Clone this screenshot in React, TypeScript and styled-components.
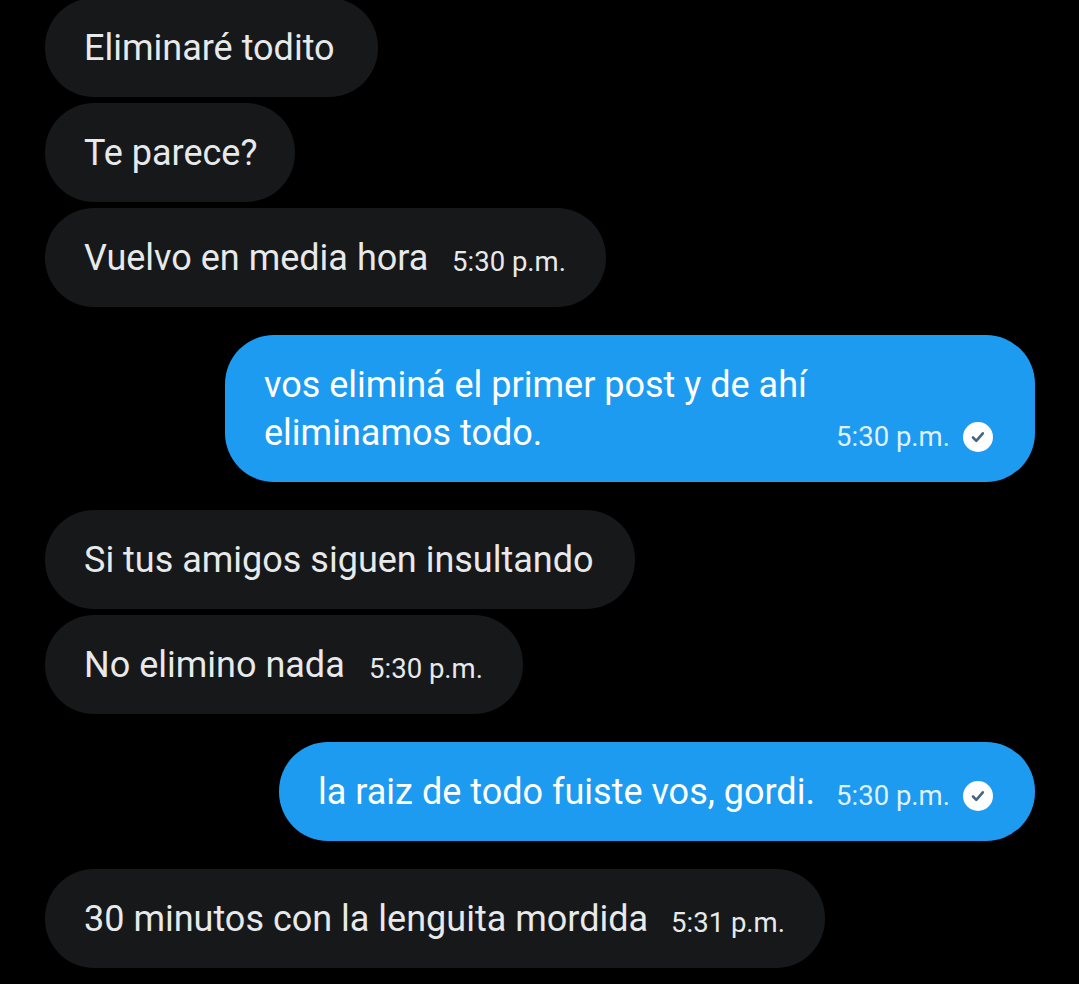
import React from "react";
import styled, { createGlobalStyle } from "styled-components";

const GlobalStyle = createGlobalStyle`
  html, body {
    margin: 0;
    padding: 0;
    background: #000;
  }
`;

type Message = {
  id: number;
  lines: string[];
  width: number;
  time?: string;
  mine?: boolean;
  gap: number;
};

const messages: Message[] = [
  { id: 1, lines: ["Eliminaré todito"], width: 333, gap: 0 },
  { id: 2, lines: ["Te parece?"], width: 250, gap: 6 },
  { id: 3, lines: ["Vuelvo en media hora"], width: 561, time: "5:30 p.m.", gap: 6 },
  {
    id: 4,
    lines: ["vos eliminá el primer post y de ahí", "eliminamos todo."],
    width: 810,
    time: "5:30 p.m.",
    mine: true,
    gap: 28,
  },
  { id: 5, lines: ["Si tus amigos siguen insultando"], width: 590, gap: 28 },
  { id: 6, lines: ["No elimino nada"], width: 478, time: "5:30 p.m.", gap: 6 },
  {
    id: 7,
    lines: ["la raiz de todo fuiste vos, gordi."],
    width: 756,
    time: "5:30 p.m.",
    mine: true,
    gap: 28,
  },
  { id: 8, lines: ["30 minutos con la lenguita mordida"], width: 780, time: "5:31 p.m.", gap: 28 },
];

function ReadCheck() {
  return (
    <svg width="30" height="30" viewBox="0 0 30 30" aria-hidden="true">
      <circle cx="15" cy="15" r="15" fill="#fff" />
      <path
        d="M10 15.5l3.3 3.3 6.5-7.5"
        fill="none"
        stroke="#46657f"
        strokeWidth="2.6"
        strokeLinecap="round"
        strokeLinejoin="round"
      />
    </svg>
  );
}

export default function App() {
  return (
    <>
      <GlobalStyle />
      <Screen>
        {messages.map((m) => {
          const stacked = m.lines.length > 1;
          return (
            <Bubble key={m.id} $mine={m.mine} $stacked={stacked} $gap={m.gap} $width={m.width}>
              <BubbleText>
                {m.lines.map((line) => (
                  <div key={line}>{line}</div>
                ))}
              </BubbleText>
              {m.time && (
                <Meta $stacked={stacked}>
                  <Time $mine={m.mine}>{m.time}</Time>
                  {m.mine && <ReadCheck />}
                </Meta>
              )}
            </Bubble>
          );
        })}
      </Screen>
    </>
  );
}

const Screen = styled.div`
  width: 1079px;
  height: 984px;
  overflow: hidden;
  background: #000;
  box-sizing: border-box;
  padding: 0 44px 0 45px;
  display: flex;
  flex-direction: column;
  align-items: flex-start;
  font-family: Roboto, "Liberation Sans", sans-serif;
  color: #e7e9ea;
`;

const Bubble = styled.div<{ $mine?: boolean; $stacked?: boolean; $gap: number; $width: number }>`
  position: relative;
  box-sizing: border-box;
  flex-shrink: 0;
  min-height: 99px;
  width: ${(p) => p.$width}px;
  margin-top: ${(p) => p.$gap}px;
  padding: ${(p) => (p.$stacked ? "26px 42px 25px 39px" : p.$mine ? "0 42px 0 39px" : "0 40px 0 39px")};
  border-radius: 49px;
  display: flex;
  align-items: center;
  justify-content: space-between;
  align-self: ${(p) => (p.$mine ? "flex-end" : "flex-start")};
  background: ${(p) => (p.$mine ? "#1d9bf0" : "#16181a")};
  color: ${(p) => (p.$mine ? "#fff" : "#e7e9ea")};

  &:first-child {
    margin-top: -2px;
  }
`;

const BubbleText = styled.div`
  font-size: 36px;
  line-height: 48px;
  white-space: nowrap;
`;

const Meta = styled.div<{ $stacked?: boolean }>`
  display: flex;
  align-items: center;
  gap: 13px;
  margin-top: ${(p) => (p.$stacked ? "0" : "9px")};
  ${(p) =>
    p.$stacked &&
    `
    position: absolute;
    right: 42px;
    bottom: 29px;
  `}
`;

const Time = styled.span<{ $mine?: boolean }>`
  font-size: 27.5px;
  line-height: 32px;
  white-space: nowrap;
  color: ${(p) => (p.$mine ? "#dff1fd" : "#e7e9ea")};
`;
